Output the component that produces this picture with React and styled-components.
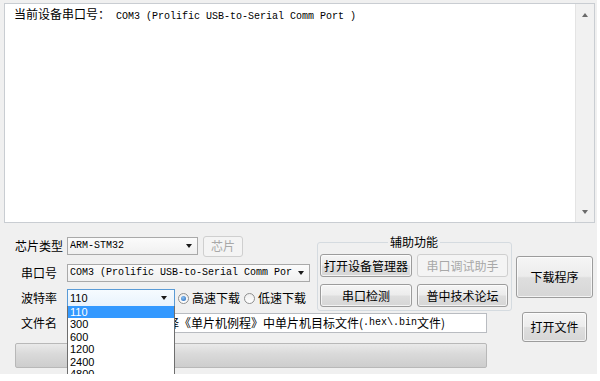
import React from 'react';
import styled, { createGlobalStyle } from 'styled-components';

const cjk = `"Noto Sans CJK SC", "Noto Sans", sans-serif`;
const mono = `"Liberation Mono", "Noto Sans CJK SC", monospace`;

const GlobalStyle = createGlobalStyle`
  html, body { margin: 0; padding: 0; background: #ffffff; overflow: hidden; }
  body { font-family: ${cjk}; font-size: 12px; color: #000; }
  * { box-sizing: border-box; }
`;

const Window = styled.div`
  width: 597px;
  height: 374px;
  background: #f0f0f0;
  display: flex;
  flex-direction: column;
`;

const Console = styled.div`
  margin: 3px 0 0 4px;
  width: 591px;
  height: 220px;
  border: 1px solid #c9cdd2;
  background: #fff;
  display: flex;
`;

const ConsoleText = styled.div`
  flex: 1;
  padding: 2px 0 0 9px;
  line-height: 16px;
  white-space: pre;
`;

const Cn = styled.span`
  font-family: ${cjk};
  font-size: 12px;
`;

const Mono = styled.span`
  font-family: ${mono};
  font-size: 10px;
`;

const Scrollbar = styled.div`
  width: 19px;
  background: #f1f1f1;
  border-left: 1px solid #e4e4e4;
  display: flex;
  flex-direction: column;
  justify-content: space-between;
  align-items: center;
  padding: 9px 0 8px;
`;

const Arrow = styled.div`
  width: 0;
  height: 0;
  border-left: 3.5px solid transparent;
  border-right: 3.5px solid transparent;
  ${(p) => (p.$up ? 'border-bottom: 4px solid #6a6a6a;' : 'border-top: 4px solid #6a6a6a;')}
`;

const Bottom = styled.div`
  display: flex;
`;

const MainCol = styled.div`
  width: 512px;
  display: flex;
  flex-direction: column;
`;

const TopRow = styled.div`
  display: flex;
  align-items: flex-start;
`;

const Form = styled.div`
  width: 317px;
  padding-left: 15px;
  display: flex;
  flex-direction: column;
`;

const Row = styled.div`
  display: flex;
  align-items: center;
  height: 22px;
  margin-top: ${(p) => p.$mt}px;
`;

const Label = styled.div`
  width: 48px;
  margin-right: 4px;
  text-align: center;
  line-height: 14px;
  white-space: nowrap;
  font-size: 12px;
`;

const Select = styled.div`
  position: relative;
  width: ${(p) => p.$w}px;
  height: 18px;
  border: 1px solid ${(p) => (p.$focus ? '#5a9bd6' : '#a9a9a9')};
  background: ${(p) => (p.$focus ? 'linear-gradient(#f6fbff, #e8f3fd)' : 'linear-gradient(#fbfbfb, #f0f0f0)')};
  display: flex;
  align-items: center;
  padding-left: 2px;
  flex-shrink: 0;
`;

const SelectText = styled.span`
  flex: 1;
  overflow: hidden;
  white-space: nowrap;
  font-family: ${(p) => (p.$sans ? '"Liberation Sans", sans-serif' : mono)};
  font-size: ${(p) => (p.$sans ? 11 : 10)}px;
  line-height: 14px;
`;

const SelectArrow = styled.span`
  width: 0;
  height: 0;
  margin: 0 ${(p) => p.$mr || 5}px 0 6px;
  border-left: 3.5px solid transparent;
  border-right: 3.5px solid transparent;
  border-top: 4px solid #1a1a1a;
`;

const DropList = styled.div`
  position: absolute;
  top: 100%;
  left: -1px;
  width: 108px;
  height: 74px;
  overflow: hidden;
  background: #fff;
  border: 1px solid #6e6e6e;
  border-top: none;
  border-bottom: none;
  z-index: 10;
`;

const Option = styled.div`
  height: 12.4px;
  line-height: 12.4px;
  padding-left: 2px;
  font-family: "Liberation Sans", sans-serif;
  font-size: 11px;
  background: ${(p) => (p.$active ? '#3399ff' : 'transparent')};
  color: ${(p) => (p.$active ? '#fff' : '#000')};
`;

const Button = styled.div`
  width: ${(p) => p.$w}px;
  height: ${(p) => p.$h}px;
  margin-left: ${(p) => p.$ml || 0}px;
  margin-top: ${(p) => p.$mt || 0}px;
  border: 1px solid ${(p) => (p.$disabled ? '#cfcfcf' : '#9c9c9c')};
  border-radius: 3px;
  background: ${(p) =>
    p.$disabled
      ? '#f4f4f4'
      : 'linear-gradient(#f5f5f5 0%, #ececec 48%, #dedede 52%, #d6d6d6 100%)'};
  color: ${(p) => (p.$disabled ? '#a8a8a8' : '#000')};
  display: flex;
  align-items: center;
  justify-content: center;
  font-size: 12px;
  line-height: 14px;
  white-space: nowrap;
  flex-shrink: 0;
  box-shadow: ${(p) => (p.$disabled ? 'none' : 'inset 0 0 0 1px rgba(255,255,255,0.7)')};
`;

const RadioWrap = styled.label`
  display: flex;
  align-items: center;
  margin-left: ${(p) => p.$ml}px;
  font-size: 12px;
  line-height: 14px;
`;

const RadioDot = styled.span`
  width: 11px;
  height: 11px;
  border-radius: 50%;
  border: 1px solid #8e8f8f;
  background: linear-gradient(#eeeeee, #ffffff);
  display: flex;
  align-items: center;
  justify-content: center;
  margin-right: 3px;
  &::after {
    content: '';
    width: 5px;
    height: 5px;
    border-radius: 50%;
    background: ${(p) => (p.$checked ? 'radial-gradient(circle at 40% 35%, #8cc2f2, #1e63b8)' : 'transparent')};
  }
`;

const GroupBox = styled.fieldset`
  margin: 12px 0 0 0;
  width: 195px;
  min-width: 0;
  padding: 0 3px 3px 2px;
  border: 1px solid #d5dbe0;
  border-radius: 3px;
`;

const Legend = styled.legend`
  margin: 0 auto;
  padding: 0 2px;
  font-size: 12px;
  line-height: 14px;
`;

const ButtonGrid = styled.div`
  display: grid;
  grid-template-columns: 92px 91px;
  grid-auto-rows: 23px;
  column-gap: 5px;
  row-gap: 7px;
  padding-top: 5px;
`;

const FileRow = styled.div`
  display: flex;
  align-items: center;
  height: 22px;
  margin: 1px 0 0 15px;
`;

const TextInput = styled.div`
  width: 420px;
  height: 20px;
  border: 1px solid #b9bcc1;
  background: #fff;
  display: flex;
  align-items: center;
  padding-left: 3px;
  white-space: nowrap;
  overflow: hidden;
  line-height: 14px;
`;

const Progress = styled.div`
  margin: 9px 0 0 15px;
  width: 472px;
  height: 25px;
  border: 1px solid #b8b8b8;
  border-radius: 2px;
  background: linear-gradient(#e9e9e9 0%, #d9d9d9 45%, #cdcdcd 100%);
`;

const SideCol = styled.div`
  width: 85px;
  padding-top: 33px;
  display: flex;
  flex-direction: column;
  align-items: center;
`;

const bauds = ['110', '300', '600', '1200', '2400', '4800', '9600'];

export default function App() {
  return (
    <>
      <GlobalStyle />
      <Window>
        <Console>
          <ConsoleText>
            <Cn>当前设备串口号：</Cn>
            <Mono> COM3 (Prolific USB-to-Serial Comm Port )</Mono>
          </ConsoleText>
          <Scrollbar>
            <Arrow $up />
            <Arrow />
          </Scrollbar>
        </Console>
        <Bottom>
          <MainCol>
            <TopRow>
              <Form>
                <Row $mt={12}>
                  <Label>芯片类型</Label>
                  <Select $w={131}>
                    <SelectText>ARM-STM32</SelectText>
                    <SelectArrow />
                  </Select>
                  <Button $w={40} $h={21} $ml={5} $disabled>
                    芯片
                  </Button>
                </Row>
                <Row $mt={5}>
                  <Label>串口号</Label>
                  <Select $w={243}>
                    <SelectText>COM3 (Prolific USB-to-Serial Comm Port )</SelectText>
                    <SelectArrow />
                  </Select>
                </Row>
                <Row $mt={3}>
                  <Label>波特率</Label>
                  <Select $w={108} $focus>
                    <SelectText $sans>110</SelectText>
                    <SelectArrow $mr={7} />
                    <DropList>
                      {bauds.map((b, i) => (
                        <Option key={b} $active={i === 0}>
                          {b}
                        </Option>
                      ))}
                    </DropList>
                  </Select>
                  <RadioWrap $ml={3}>
                    <RadioDot $checked />
                    高速下载
                  </RadioWrap>
                  <RadioWrap $ml={4}>
                    <RadioDot />
                    低速下载
                  </RadioWrap>
                </Row>
              </Form>
              <GroupBox>
                <Legend>辅助功能</Legend>
                <ButtonGrid>
                  <Button $w={92} $h={23}>打开设备管理器</Button>
                  <Button $w={91} $h={23} $disabled>串口调试助手</Button>
                  <Button $w={92} $h={23}>串口检测</Button>
                  <Button $w={91} $h={23}>普中技术论坛</Button>
                </ButtonGrid>
              </GroupBox>
            </TopRow>
            <FileRow>
              <Label>文件名</Label>
              <TextInput>
                <Cn>请点击打开文件选择《单片机例程》中单片机目标文件(</Cn>
                <Mono>.hex\.bin</Mono>
                <Cn>文件)</Cn>
              </TextInput>
            </FileRow>
            <Progress />
          </MainCol>
          <SideCol>
            <Button $w={77} $h={42}>下载程序</Button>
            <Button $w={65} $h={30} $mt={14}>打开文件</Button>
          </SideCol>
        </Bottom>
      </Window>
    </>
  );
}
